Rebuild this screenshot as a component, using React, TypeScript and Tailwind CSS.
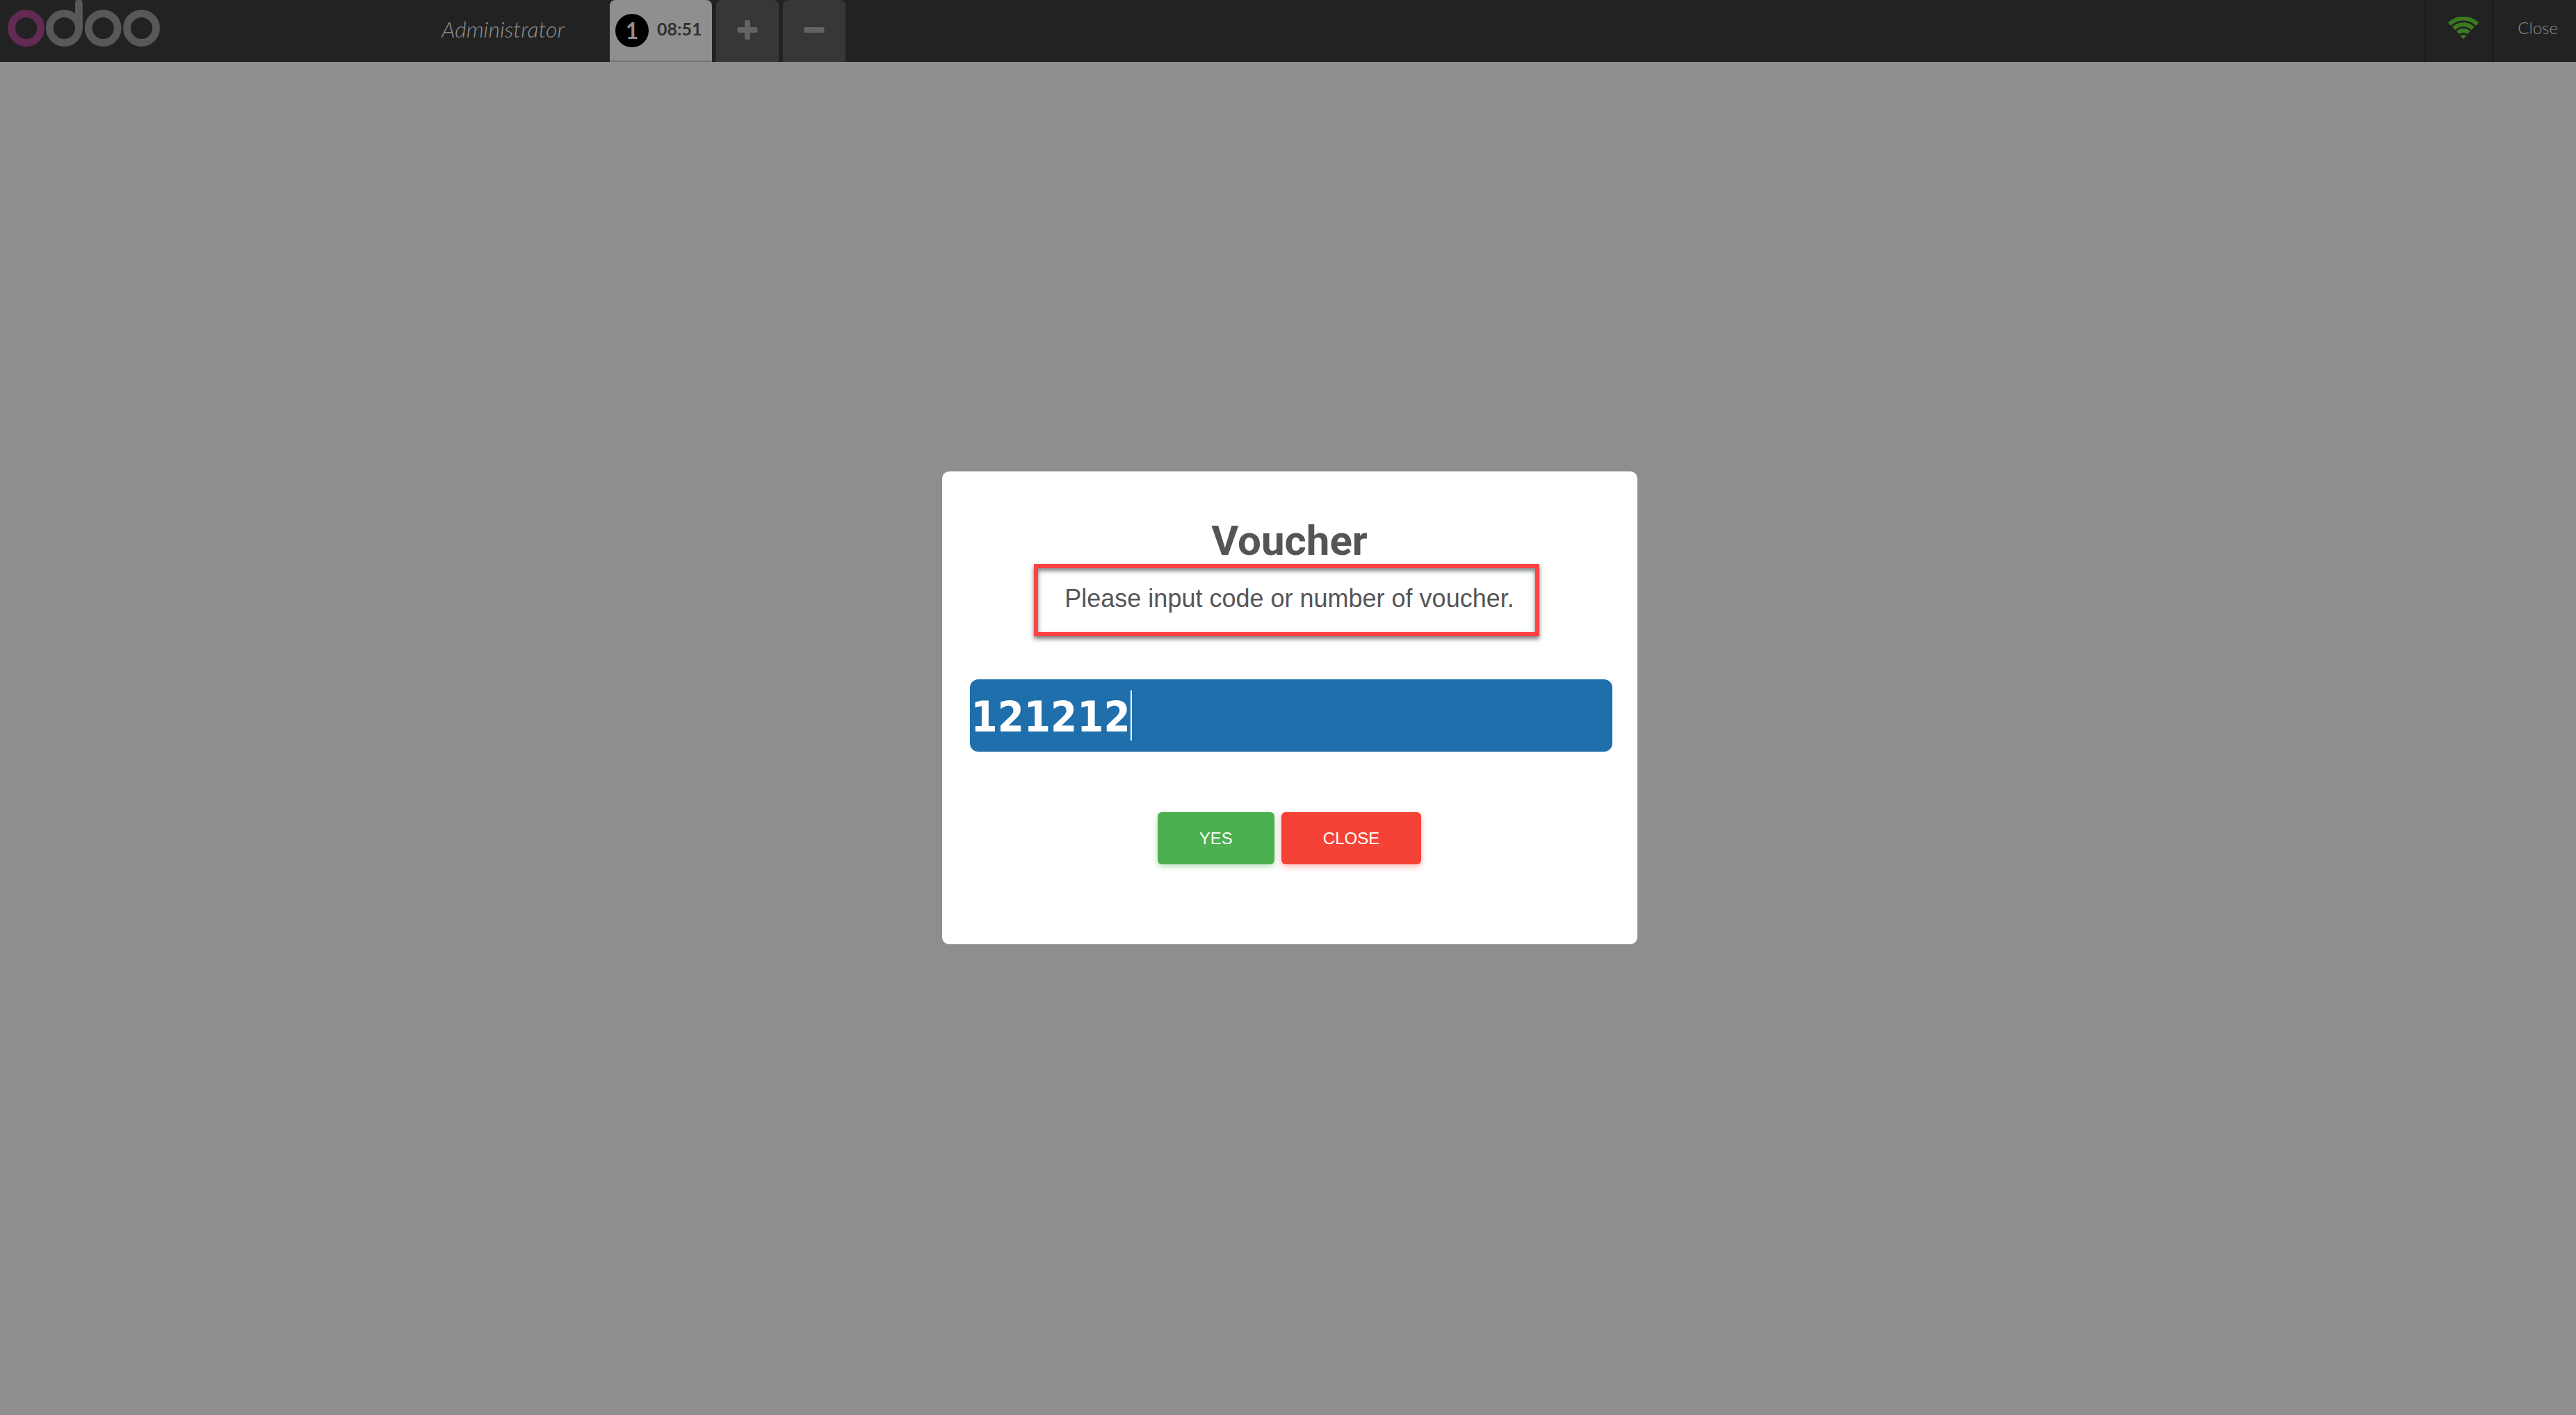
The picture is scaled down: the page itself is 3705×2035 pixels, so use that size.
import { useState } from "react";

function OdooLogo() {
  return (
    <svg width="240" height="72" viewBox="0 0 240 72" fill="none" role="img" aria-label="odoo">
      <g strokeWidth="10.8">
        <circle cx="37.6" cy="40.5" r="21" stroke="#632a54" />
        <circle cx="92.4" cy="40.5" r="21" stroke="#585858" />
        <circle cx="148.2" cy="40.5" r="21" stroke="#585858" />
        <circle cx="203.5" cy="40.5" r="21" stroke="#585858" />
        <path d="M113.4 4V40.5" stroke="#585858" strokeLinecap="round" />
      </g>
    </svg>
  );
}

function PlusIcon() {
  return (
    <svg width="30" height="28" viewBox="0 0 30 28" fill="#636363" aria-hidden="true">
      <rect x="0.5" y="10" width="29" height="8" rx="2" />
      <rect x="11" y="0" width="8" height="28" rx="2" />
    </svg>
  );
}

function MinusIcon() {
  return (
    <svg width="30" height="28" viewBox="0 0 30 28" fill="#636363" aria-hidden="true">
      <rect x="0.5" y="10" width="29" height="8" rx="2" />
    </svg>
  );
}

function WifiIcon() {
  return (
    <svg width="44" height="32" viewBox="0 0 44 32" fill="none" stroke="#3b7a22" aria-hidden="true">
      <path d="M2 10.8A28.5 28.5 0 0 1 42 10.8" strokeWidth="6" />
      <path d="M8.2 17A19.6 19.6 0 0 1 35.8 17" strokeWidth="6" />
      <path d="M14.2 23.2A11 11 0 0 1 29.8 23.2" strokeWidth="6" />
      <path d="M22 32L17.8 27.9Q22 24.2 26.2 27.9Z" fill="#3b7a22" stroke="none" />
    </svg>
  );
}

function TopBar() {
  return (
    <header className="flex h-[89px] items-stretch bg-[#222222] font-['Lato',sans-serif]">
      <div className="w-[635px] shrink-0">
        <OdooLogo />
      </div>
      <span className="w-[242px] shrink-0 pt-[22px] text-[32px] leading-[40px] font-light text-[#8e8e8e] italic">
        Administrator
      </span>
      <nav className="flex gap-[6px]">
        <button className="flex w-[147px] gap-3 rounded-t-lg border-b-2 border-[#757575] bg-[#8f8f8f] pl-2 text-left text-[#303030]">
          <span className="mt-5 size-12 rounded-full bg-black text-center text-[32px] leading-[48px] font-bold text-[#8f8f8f]">
            1
          </span>
          <span className="mt-[25px] text-[25px] leading-[32px] font-bold">08:51</span>
        </button>
        <button aria-label="New order" className="flex w-[90px] justify-center rounded-t-lg bg-[#373737] pt-[29px]">
          <PlusIcon />
        </button>
        <button aria-label="Delete order" className="flex w-[90px] justify-center rounded-t-lg bg-[#373737] pt-[29px]">
          <MinusIcon />
        </button>
      </nav>
      <div className="ml-auto flex">
        <div className="w-[98px] border-l-2 border-[#1b1b1b] pt-6 pl-8">
          <WifiIcon />
        </div>
        <button className="flex border-l-2 border-[#1b1b1b] pt-6 pr-[26px] pl-[34px] text-[24px] leading-[32px] font-light text-[#8e8e8e]">
          Close
        </button>
      </div>
    </header>
  );
}

function VoucherDialog() {
  const [code, setCode] = useState("121212");
  return (
    <section
      role="dialog"
      aria-labelledby="voucher-title"
      className="flex w-full max-w-[1000px] flex-col items-center rounded-[10px] bg-white px-10 pt-[67px] pb-[115px] font-['Liberation_Sans',Arial,sans-serif] text-[#555555]"
    >
      <h1 id="voucher-title" className="font-['Roboto',sans-serif] text-[60px] leading-[66px] font-bold">
        Voucher
      </h1>
      <label
        htmlFor="voucher-code"
        className="mr-2 block h-[104px] w-[727px] max-w-full border-[6px] border-[#ff4343] pt-6 pl-2 text-center text-[36px] leading-[40px] shadow-[0_4px_6px_rgba(0,0,0,0.5),inset_0_4px_6px_rgba(0,0,0,0.5)]"
      >
        Please input code or number of voucher.
      </label>
      <div className="relative -mr-1 mt-[62px] self-stretch">
        <input
          id="voucher-code"
          value={code}
          onChange={(e) => setCode(e.target.value)}
          className="block h-[104px] w-full rounded-xl bg-[#1e6fab] px-0.5 pt-1 font-['DejaVu_Sans_Condensed','DejaVu_Sans',sans-serif] text-[61px] font-bold text-white caret-transparent outline-none"
        />
        <span className="absolute top-4 left-[231px] h-[72px] w-[2px] bg-white" />
      </div>
      <div className="mt-[87px] flex gap-[10px] text-[24px] leading-[27px] text-white">
        <button className="rounded-md bg-[#4caf50] px-[60px] py-6 shadow-[0_3px_8px_rgba(76,175,80,0.4)]">YES</button>
        <button className="rounded-md bg-[#f44336] px-[60px] py-6 shadow-[0_3px_8px_rgba(244,67,54,0.4)]">CLOSE</button>
      </div>
    </section>
  );
}

export default function App() {
  return (
    <div className="relative flex min-h-screen flex-col bg-[#8e8e8e]">
      <TopBar />
      <main className="absolute inset-0 flex items-center justify-center pl-1">
        <VoucherDialog />
      </main>
    </div>
  );
}
